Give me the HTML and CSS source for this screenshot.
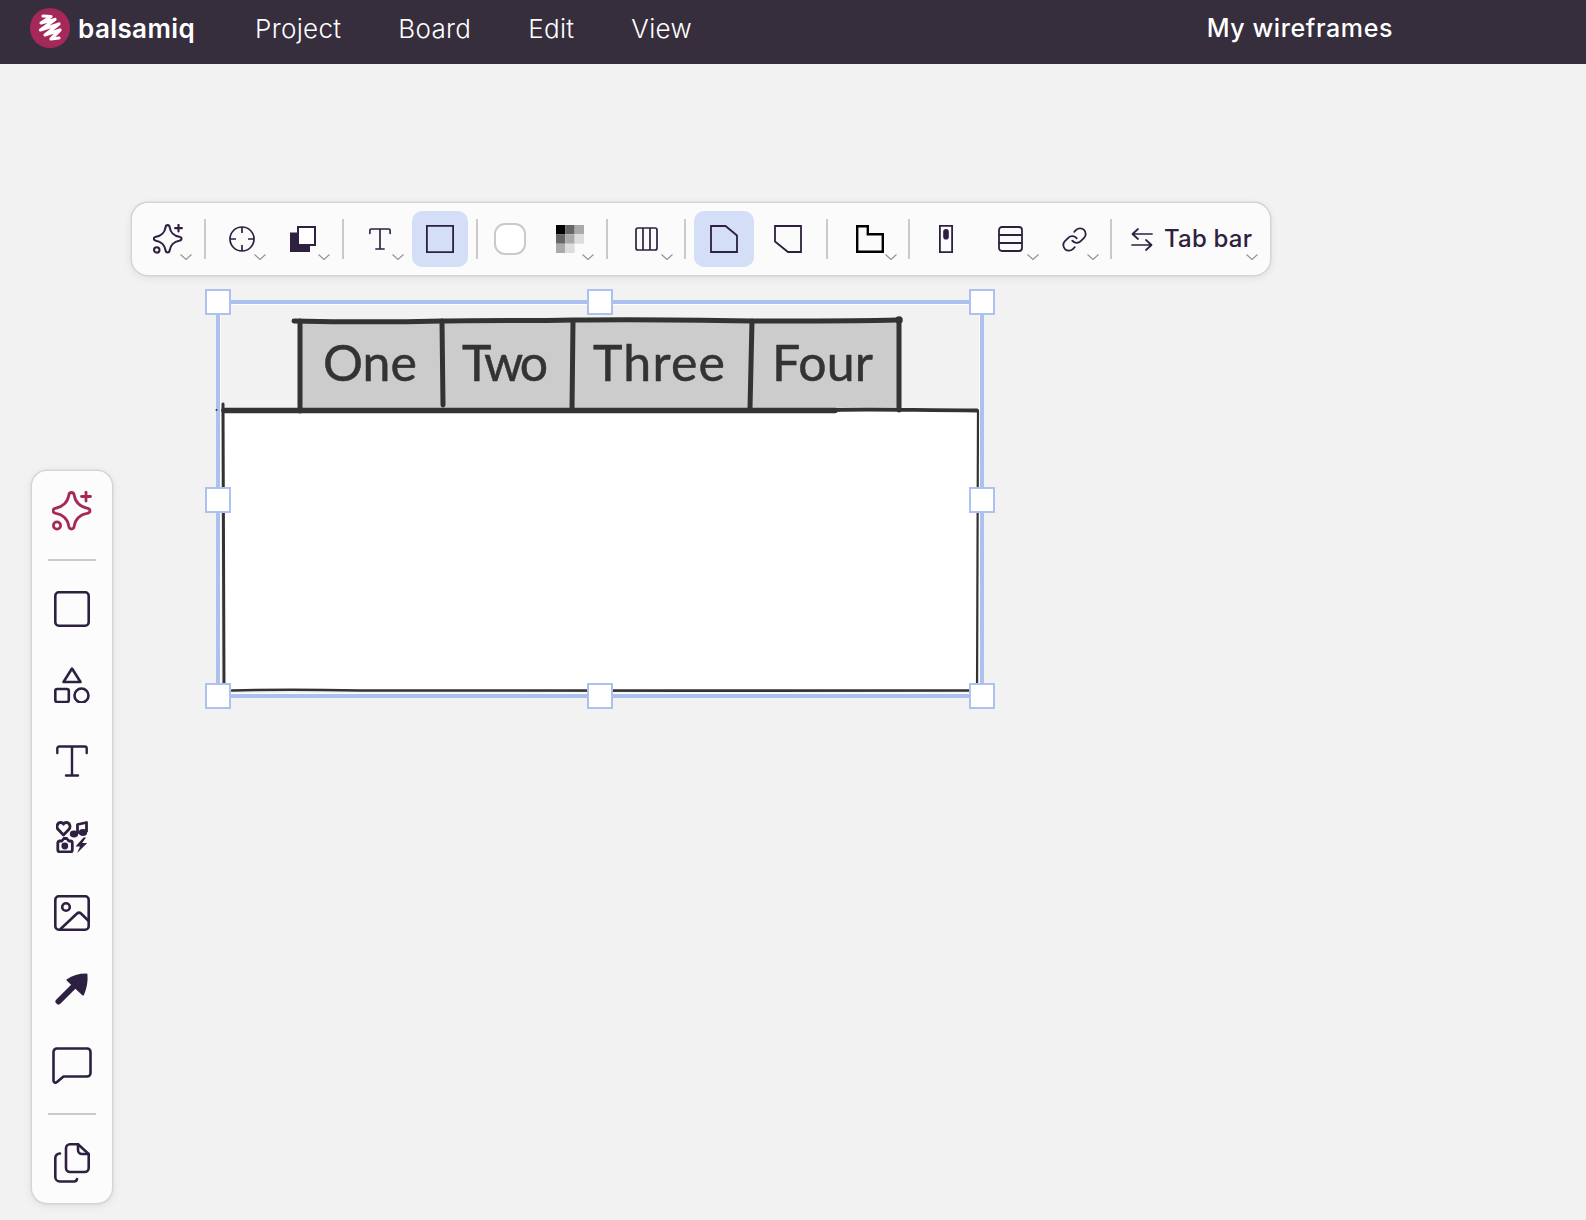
FILE: index.html
```html
<!DOCTYPE html>
<html lang="en">
<head>
<meta charset="utf-8">
<title>Balsamiq</title>
<link rel="stylesheet" href="styles.css">
</head>
<body>
<svg class="defs" width="0" height="0" aria-hidden="true">
  <symbol id="sparkle" viewBox="0 0 40 40">
    <path d="M16.700 4.500C17 2.500 18 1.500 19.500 1.500S22 2.500 22.300 4.500C23.200 11 28.200 16 35 17.100 37 17.500 38 18.300 38 19.700S37 21.900 35 22.300C28.200 23.400 23.200 28.400 22.300 34.900 22 36.900 21 38 19.500 38S17 36.900 16.700 34.900C15.800 28.400 10.800 23.400 4 22.300 2 21.900 1 21.100 1 19.700S2 17.500 4 17.100C10.800 16 15.800 11 16.700 4.500z" fill="none" stroke="currentColor" stroke-width="2.800" stroke-linejoin="round"/>
    <path d="M34 1v9M29.500 5.500h9" fill="none" stroke="currentColor" stroke-width="2.800" stroke-linecap="round"/>
    <circle cx="5" cy="34.500" r="3.600" fill="none" stroke="currentColor" stroke-width="2.800"/>
  </symbol>
  <symbol id="bigt" viewBox="0 0 32 32">
    <path d="M1.300 8V3.500a2 2 0 0 1 2-2h25.400a2 2 0 0 1 2 2V8M16 1.500v29M10 30.500h12" fill="none" stroke="currentColor" stroke-width="2.400" stroke-linecap="round"/>
  </symbol>
  <symbol id="chev" viewBox="0 0 12 6">
    <path d="M.5.5 6 5.500 11.500.5" fill="none" stroke="#958f98" stroke-width="1.100"/>
  </symbol>
</svg>

<header class="topbar">
  <div class="brand">
    <svg class="logo" viewBox="0 0 40 40" aria-hidden="true">
      <circle cx="20" cy="20" r="20" fill="#a4295a"/>
      <path d="M13 8 21 8.500 11 15 25 11.500 10.500 22 29 16 15 27 30 22 21 31 29 30" fill="none" stroke="#fff" stroke-width="3.200" stroke-linejoin="round" stroke-linecap="round"/>
    </svg>
    <span class="brand-name">balsamiq</span>
  </div>
  <nav class="menu">
    <a class="menu-item">Project</a>
    <a class="menu-item">Board</a>
    <a class="menu-item">Edit</a>
    <a class="menu-item">View</a>
  </nav>
  <div class="doc-title">My wireframes</div>
</header>

<main class="canvas">
  <div class="toolbar">
    <button class="tool">
      <svg class="ic" width="30" height="30"><use href="#sparkle"/></svg>
      <svg class="chev r4"><use href="#chev"/></svg>
    </button>
    <span class="sep"></span>
    <button class="tool">
      <svg class="ic" width="26" height="26" viewBox="0 0 26 26"><g fill="none" stroke="currentColor" stroke-width="1.700"><circle cx="13" cy="13" r="12"/><path d="M13 1v6M13 19v6M1 13h6M19 13h6"/></g></svg>
      <svg class="chev r4"><use href="#chev"/></svg>
    </button>
    <button class="tool ml1">
      <svg class="ic" width="26" height="26" viewBox="0 0 26 26"><path d="M0 6.500h20V26H0z" fill="currentColor"/><path d="M8 1h17v18H8z" fill="#fff" stroke="currentColor" stroke-width="2"/></svg>
      <svg class="chev r1"><use href="#chev"/></svg>
    </button>
    <span class="sep ml7"></span>
    <button class="tool">
      <svg class="ic" width="22" height="22"><use href="#bigt"/></svg>
      <svg class="chev r4"><use href="#chev"/></svg>
    </button>
    <button class="tool is-active">
      <svg class="ic" width="28" height="28" viewBox="0 0 28 28"><path d="M.9.900h26.200v26.200H.900z" fill="none" stroke="currentColor" stroke-width="1.800"/></svg>
    </button>
    <span class="sep"></span>
    <button class="tool mln4">
      <span class="swatch"></span>
    </button>
    <button class="tool">
      <svg class="ic" width="28" height="28" viewBox="0 0 27 27"><path d="M0 0h9v9H0z" fill="#000"/><path d="M9 0h9v9H9zM0 9h9v9H0z" fill="#666"/><path d="M18 0h9v9h-9zM9 9h9v9H9zM0 18h9v9H0z" fill="#aaa"/><path d="M18 9h9v9h-9zM9 18h9v9H9z" fill="#ddd"/></svg>
      <svg class="chev r4"><use href="#chev"/></svg>
    </button>
    <span class="sep mr2"></span>
    <button class="tool">
      <svg class="ic" width="23" height="24" viewBox="0 0 23 24"><g fill="none" stroke="currentColor" stroke-width="1.700"><rect x="1" y="1" width="21" height="22" rx="2"/><path d="M8 1v22M15 1v22"/></g></svg>
      <svg class="chev r1"><use href="#chev"/></svg>
    </button>
    <span class="sep ml6"></span>
    <button class="tool tool-wide is-active">
      <svg class="ic" width="28" height="28" viewBox="0 0 28 28"><path d="M1 1h14.500L27 10.500V27H1z" fill="none" stroke="currentColor" stroke-width="1.800"/></svg>
    </button>
    <button class="tool ml2">
      <svg class="ic" width="28" height="28" viewBox="0 0 28 28"><path d="M1 1h26v26H14L1 16.500z" fill="none" stroke="currentColor" stroke-width="1.800"/></svg>
    </button>
    <span class="sep ml6 mr6"></span>
    <button class="tool">
      <svg class="ic" width="28" height="28" viewBox="0 0 28 28"><path d="M1.200 1.200h10.600v8h15v17.600H1.200z" fill="none" stroke="#000" stroke-width="2.400"/></svg>
      <svg class="chev r1"><use href="#chev"/></svg>
    </button>
    <span class="sep ml6"></span>
    <button class="tool">
      <svg class="ic" width="14" height="28" viewBox="0 0 14 28"><path d="M.9.900h12.200v26.200H.900z" fill="none" stroke="currentColor" stroke-width="1.800"/><rect x="4.200" y="4" width="5.600" height="10.500" rx="2.800" fill="currentColor"/></svg>
    </button>
    <button class="tool ml4">
      <svg class="ic" width="25" height="26" viewBox="0 0 25 26"><g fill="none" stroke="currentColor" stroke-width="1.800"><rect x="1" y="1" width="23" height="24" rx="3"/><path d="M1 9h23M1 17h23"/></g></svg>
      <svg class="chev rn1"><use href="#chev"/></svg>
    </button>
    <button class="tool ml4">
      <svg class="ic" width="27" height="27" viewBox="0 0 24 24"><g fill="none" stroke="currentColor" stroke-width="1.600" stroke-linecap="round" stroke-linejoin="round"><path d="M10 13a5 5 0 0 0 7.540.540l3-3a5 5 0 0 0-7.070-7.070l-1.720 1.710"/><path d="M14 11a5 5 0 0 0-7.540-.540l-3 3a5 5 0 0 0 7.070 7.070l1.710-1.710"/></g></svg>
      <svg class="chev r3"><use href="#chev"/></svg>
    </button>
    <span class="sep ml4"></span>
    <button class="tool tool-label">
      <svg class="ic" width="22" height="23" viewBox="0 0 22 23"><path d="M21 6H1.500M7 1 1.500 6 7 11M1 17h19.500M15 12l5.500 5-5.500 5" fill="none" stroke="currentColor" stroke-width="1.700" stroke-linecap="round" stroke-linejoin="round"/></svg>
      <span class="tool-text">Tab bar</span>
      <svg class="chev r4"><use href="#chev"/></svg>
    </button>
  </div>

  <aside class="palette">
    <button class="pal-item pal-accent"><svg width="40" height="40"><use href="#sparkle"/></svg></button>
    <span class="pal-sep"></span>
    <button class="pal-item"><svg width="36" height="36" viewBox="0 0 36 36"><rect x="1.300" y="1.300" width="33.400" height="33.400" rx="3.500" fill="none" stroke="currentColor" stroke-width="2.600"/></svg></button>
    <button class="pal-item"><svg width="36" height="36" viewBox="0 0 36 36"><g fill="none" stroke="currentColor" stroke-width="2.600" stroke-linejoin="round"><path d="M18 1.500 26.500 15h-17z"/><rect x="1.300" y="22" width="13.500" height="13" rx="2"/><circle cx="27.500" cy="28.500" r="7"/></g></svg></button>
    <button class="pal-item"><svg width="32" height="32"><use href="#bigt"/></svg></button>
    <button class="pal-item"><svg width="32" height="32" viewBox="0 0 32 32"><g fill="none" stroke="currentColor" stroke-width="2.800" stroke-linejoin="round"><path d="M7.500 14 2 8.300C-.2 5.500 1.600 1.500 4.700 1.500c1.300 0 2.200.6 2.800 1.700.6-1.100 1.500-1.700 2.800-1.700 3.100 0 4.900 4 2.700 6.800z"/><path d="M21.500 13V3.500l9-2V11"/><path d="M3.800 20h2l2-2.500h3l2 2.500h1.500a2 2 0 0 1 2 2v7a2 2 0 0 1-2 2H3.800a2 2 0 0 1-2-2v-7a2 2 0 0 1 2-2z"/></g><ellipse cx="18" cy="13" rx="4.200" ry="3.400" fill="currentColor"/><ellipse cx="27" cy="11.500" rx="4.200" ry="3.400" fill="currentColor"/><circle cx="8.800" cy="25" r="3.400" fill="currentColor"/><path d="M27.500 16.500 19.500 25.500h4.500l-2.800 6.500 10-10h-5l3.800-5.500z" fill="currentColor"/></svg></button>
    <button class="pal-item"><svg width="36" height="36" viewBox="0 0 36 36"><g fill="none" stroke="currentColor" stroke-width="2.600" stroke-linejoin="round"><rect x="1.300" y="1.300" width="33.400" height="33.400" rx="3.500"/><circle cx="12" cy="12" r="3.800"/><path d="M6 34.500 23 18.500c1.500-1.400 2.500-1.400 4 0l7.700 7.500"/></g></svg></button>
    <button class="pal-item"><svg width="34" height="32" viewBox="0 0 34 32"><path d="M3.500 28.500 19 13" fill="none" stroke="currentColor" stroke-width="6" stroke-linecap="round"/><path d="M12.500 7C18 3 25 1.500 31.500 1.500c.5 6.500-.5 13-3.500 20z" fill="currentColor" stroke="currentColor" stroke-width="2" stroke-linejoin="round"/></svg></button>
    <button class="pal-item"><svg width="40" height="37" viewBox="0 0 40 37"><path d="M5 1.500h30A3.500 3.500 0 0 1 38.500 5v21a3.500 3.500 0 0 1-3.500 3.500H11.500L5 35c-1.600 1.300-3.500.5-3.500-1.500V5A3.500 3.500 0 0 1 5 1.500z" fill="none" stroke="currentColor" stroke-width="2.600" stroke-linejoin="round"/></svg></button>
    <span class="pal-sep"></span>
    <button class="pal-item"><svg width="36" height="40" viewBox="0 0 36 40"><g fill="none" stroke="currentColor" stroke-width="2.600" stroke-linecap="round" stroke-linejoin="round"><path d="M16 1.300h8L34.700 11v14a4 4 0 0 1-4 4H16a4 4 0 0 1-4-4V5.300a4 4 0 0 1 4-4z"/><path d="M24 1.300V7a4 4 0 0 0 4 4h6.700"/><path d="M6 10.500a4.500 4.500 0 0 0-4.700 4.500v19a4.500 4.500 0 0 0 4.500 4.500H20a3 3 0 0 0 3-2.500"/></g></svg></button>
  </aside>

  <section class="selection">
    <svg class="sketch" width="760" height="390" viewBox="220 304 760 390">
      <path class="sk-white" d="M222 411h756v280H222z"/>
      <path class="sk-grey" d="M300 321h599v89H300z"/>
      <g class="sk-line">
        <path d="M294 321C340 322 400 322 442 321 490 320 530 321 573 320 640 319 700 320 752 321 800 321 860 321 897 320" stroke-width="5"/>
        <path d="M300 321V411M442 321 443 405M573 321 572 410M752 321 750 408M899 320 899 410" stroke-width="5"/>
        <path d="M224 410.500H835" stroke-width="5.500"/>
        <path d="M835 410 C870 409 900 410 977 410.500" stroke-width="3.800"/>
        <path d="M223 404 224 690" stroke-width="3"/>
        <path d="M978 411 977 692" stroke-width="2.200"/>
        <path d="M232 690.500C270 689.500 310 689.500 360 690.500 500 691 800 690.500 972 690.500" stroke-width="2.600"/>
      </g>
      <circle class="sk-dot" cx="899" cy="320" r="3.800"/>
      <circle class="sk-dot" cx="216.500" cy="410" r="1"/>
      <g class="sk-text">
        <text x="323" y="381" textLength="94">One</text>
        <text x="462" y="381" textLength="86">Two</text>
        <text x="593" y="381" textLength="132">Three</text>
        <text x="772" y="381" textLength="101">Four</text>
      </g>
    </svg>
    <span class="handle h-tl"></span>
    <span class="handle h-tc"></span>
    <span class="handle h-tr"></span>
    <span class="handle h-ml"></span>
    <span class="handle h-mr"></span>
    <span class="handle h-bl"></span>
    <span class="handle h-bc"></span>
    <span class="handle h-br"></span>
  </section>
</main>
</body>
</html>
```

FILE: styles.css
```css
* { box-sizing: border-box; }

html, body {
  margin: 0;
  height: 100%;
  overflow: hidden;
}

body {
  background: #f2f2f2;
  font-family: "Inter", "Lato", sans-serif;
  color: #2e2040;
  display: flex;
  flex-direction: column;
}

.defs { position: absolute; }

.topbar {
  flex: none;
  height: 64px;
  background: #362e3d;
  color: #fff;
  display: flex;
  align-items: center;
  padding: 0 193px 8px 30px;
}

.brand {
  display: flex;
  align-items: center;
  gap: 8px;
}

.logo {
  width: 40px;
  height: 40px;
}

.brand-name {
  font-size: 26px;
  font-weight: 600;
  letter-spacing: .4px;
}

.menu {
  display: flex;
  gap: 57px;
  margin-left: 60px;
}

.menu-item {
  font-size: 26px;
  font-weight: 300;
  letter-spacing: .3px;
}

.doc-title {
  margin-left: auto;
  font-size: 25px;
  font-weight: 500;
  letter-spacing: .6px;
}

.canvas {
  position: relative;
  flex: 1;
}

/* top floating toolbar */
.toolbar {
  position: absolute;
  left: 132px;
  top: 139px;
  width: 1138px;
  height: 72px;
  display: flex;
  align-items: center;
  gap: 4px;
  padding-left: 8px;
  background: #fbfbfb;
  border-radius: 16px;
  box-shadow: 0 0 0 1.500px #d8d4d5, 0 2px 10px rgba(0, 0, 0, .1);
}

.tool {
  position: relative;
  flex: none;
  width: 56px;
  height: 56px;
  padding: 0;
  border: 0;
  border-radius: 10px;
  background: none;
  color: inherit;
  font: inherit;
  display: flex;
  align-items: center;
  justify-content: center;
}

.tool-wide { width: 60px; }

.tool.is-active { background: #d4dff7; }

.tool-label {
  width: 142px;
  gap: 11px;
  justify-content: flex-start;
  padding-left: 11px;
}

.tool-text {
  font-size: 24px;
  font-weight: 500;
  letter-spacing: .2px;
  line-height: 1;
  white-space: nowrap;
}

.ic { flex: none; }

.chev {
  position: absolute;
  top: 43px;
  width: 12px;
  height: 6px;
}

.r4 { right: 4px; }
.r3 { right: 3px; }
.r1 { right: 1px; }
.rn1 { right: -1px; }

.sep {
  flex: none;
  width: 2px;
  height: 40px;
  margin: 0 4px;
  background: #cdc8ca;
}

.ml1 { margin-left: 1px; }
.ml2 { margin-left: 2px; }
.ml4 { margin-left: 4px; }
.ml6 { margin-left: 6px; }
.ml7 { margin-left: 7px; }
.mr2 { margin-right: 6px; }
.mr6 { margin-right: 10px; }
.mln4 { margin-left: -4px; }

.swatch {
  width: 32px;
  height: 32px;
  background: #fff;
  border: 2px solid #cdc8ca;
  border-radius: 11px;
}

/* left palette */
.palette {
  position: absolute;
  left: 32px;
  top: 407px;
  width: 80px;
  height: 732px;
  display: flex;
  flex-direction: column;
  align-items: center;
  padding-top: 2px;
  background: #fcfcfc;
  border-radius: 15px;
  box-shadow: 0 0 0 1.500px #d8d4d5, 0 2px 10px rgba(0, 0, 0, .1);
}

.pal-item {
  flex: none;
  width: 100%;
  height: 76px;
  padding: 0;
  border: 0;
  background: none;
  color: inherit;
  display: flex;
  align-items: center;
  justify-content: center;
}

.pal-accent { color: #a4295a; }

.pal-sep {
  flex: none;
  width: 48px;
  height: 2px;
  margin: 10px 0;
  background: #cdc8ca;
}

/* selected wireframe */
.selection {
  position: absolute;
  left: 216px;
  top: 236px;
  width: 768px;
  height: 398px;
  border: 4px solid #adc1f0;
  box-shadow: inset 0 0 0 1px #fff;
}

.sketch {
  position: absolute;
  left: 0;
  top: 0;
  overflow: visible;
}

.sk-white { fill: #fff; }
.sk-grey { fill: #ccc; }
.sk-dot { fill: #333; }

.sk-line path {
  fill: none;
  stroke: #333;
  stroke-linecap: round;
}

.sk-text text {
  font-family: "Lato", "Noto Sans", sans-serif;
  font-size: 50px;
  font-weight: 400;
  fill: #333;
  stroke: #333;
  stroke-width: .5px;
  stroke-linejoin: round;
}

.handle {
  position: absolute;
  width: 26px;
  height: 26px;
  margin: -13px 0 0 -13px;
  background: #fff;
  border: 2px solid #adc1f0;
}

.h-tl { left: -2px; top: -2px; }
.h-tc { left: 380px; top: -2px; }
.h-tr { left: 762px; top: -2px; }
.h-ml { left: -2px; top: 196px; }
.h-mr { left: 762px; top: 196px; }
.h-bl { left: -2px; top: 392px; }
.h-bc { left: 380px; top: 392px; }
.h-br { left: 762px; top: 392px; }
```
